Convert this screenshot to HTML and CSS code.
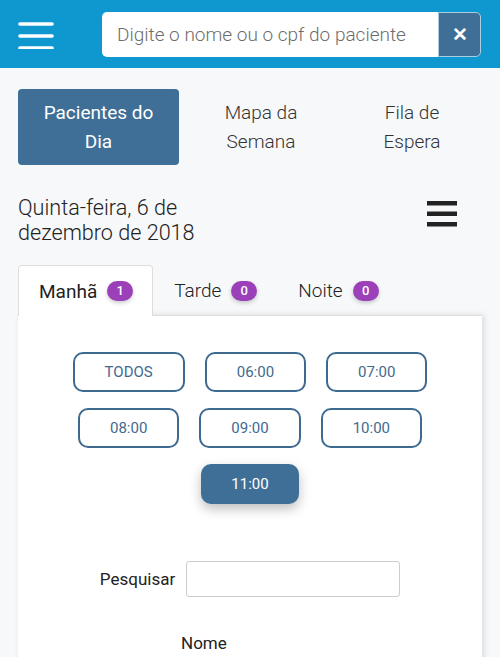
FILE: index.html
```html
<!DOCTYPE html>
<html lang="pt-BR">
<head>
  <meta charset="UTF-8">
  <meta name="viewport" content="width=device-width, initial-scale=1.0">
  <title>Pacientes do Dia</title>
  <link rel="stylesheet" href="styles.css">
</head>
<body>

<div class="topbar">
  <button class="menu-btn" aria-label="Menu">
    <svg width="36" height="28" viewBox="0 0 36 28">
      <line x1="2" y1="3" x2="34" y2="3" />
      <line x1="2" y1="15" x2="34" y2="15" />
      <line x1="2" y1="27" x2="34" y2="27" />
    </svg>
  </button>
  <div class="search">
    <input type="text" placeholder="Digite o nome ou o cpf do paciente">
    <button class="clear-btn" aria-label="Limpar">&#10005;</button>
  </div>
</div>

<div class="page">
  <ul class="nav">
    <li class="nav-item active">Pacientes do<br>Dia</li>
    <li class="nav-item mapa">Mapa da<br>Semana</li>
    <li class="nav-item fila">Fila de<br>Espera</li>
  </ul>

  <div class="day">
    <div class="date">Quinta-feira, 6 de<br>dezembro de 2018</div>
    <svg class="bars" width="30" height="26" viewBox="0 0 30 26">
      <rect x="0" y="0" width="30" height="4.5" />
      <rect x="0" y="10.5" width="30" height="4.5" />
      <rect x="0" y="21" width="30" height="4.5" />
    </svg>
  </div>

  <ul class="tabs">
    <li class="tab active">Manhã <span class="badge">1</span></li>
    <li class="tab">Tarde <span class="badge">0</span></li>
    <li class="tab">Noite <span class="badge">0</span></li>
  </ul>

  <div class="panel">
    <div class="horarios">
      <button class="hora">TODOS</button>
      <button class="hora">06:00</button>
      <button class="hora">07:00</button>
      <button class="hora">08:00</button>
      <button class="hora">09:00</button>
      <button class="hora">10:00</button>
      <button class="hora selected">11:00</button>
    </div>

    <div class="filtro">
      <label for="pesquisar">Pesquisar</label>
      <input type="text" id="pesquisar">
    </div>

    <table class="lista">
      <thead>
        <tr><th>Nome</th></tr>
      </thead>
    </table>
  </div>
</div>

</body>
</html>
```

FILE: styles.css
```css
body {
  font-family: 'Roboto', sans-serif;
  background-color: #f7f8fa;
  color: #222;
  margin: 0;
}

ul {
  list-style: none;
  margin: 0;
  padding: 0;
}

.topbar {
  display: flex;
  align-items: center;
  height: 68px;
  padding: 0 19px 0 18px;
  background-color: #0f97cf;
  gap: 48px;
}

.menu-btn {
  border: none;
  background: none;
  padding: 0;
  width: 36px;
  height: 30px;
  margin-top: 2px;
}

.menu-btn svg {
  display: block;
  stroke: #fff;
  stroke-width: 3.6;
  stroke-linecap: round;
}

.search {
  flex: 1;
  display: flex;
  height: 45px;
}

.search input {
  flex: 1;
  min-width: 0;
  border: none;
  border-radius: 5px 0 0 5px;
  padding: 0 15px;
  font-family: 'Roboto', sans-serif;
  font-weight: 300;
  font-size: 19px;
  color: #333;
  background-color: #fff;
}

.search input::placeholder {
  color: #6d6d6d;
}

.clear-btn {
  width: 43px;
  border: 1px solid #a9cde2;
  border-radius: 0 5px 5px 0;
  background-color: #3f6f96;
  color: #fff;
  font-size: 19px;
  font-weight: bold;
  padding: 0;
}

.page {
  padding: 21px 18px 0 18px;
}

.nav {
  display: flex;
}

.nav-item {
  width: 161px;
  padding: 9px 0;
  text-align: center;
  font-size: 19px;
  font-weight: 300;
  line-height: 29px;
  color: #333;
  border-radius: 4px;
}

.nav-item.active {
  background-color: #3f6f96;
  color: #fff;
  font-weight: 400;
}

.nav-item.mapa {
  width: 164px;
}

.nav-item.fila {
  width: 138px;
}

.day {
  display: flex;
  justify-content: space-between;
  align-items: flex-start;
  margin-top: 30px;
  padding-right: 25px;
}

.date {
  font-size: 21.6px;
  font-weight: 300;
  line-height: 25px;
}

.bars {
  display: block;
  margin-top: 6px;
  fill: #222;
}

.tabs {
  display: flex;
  margin-top: 20px;
  position: relative;
  z-index: 1;
}

.tab {
  display: flex;
  align-items: center;
  gap: 10px;
  height: 50px;
  padding: 0 19px 0 20px;
  font-size: 19px;
  font-weight: 300;
  color: #222;
  border: 1px solid transparent;
  border-bottom: none;
  border-radius: 4px 4px 0 0;
  box-sizing: border-box;
}

.tab.active {
  height: 51px;
  background-color: #fff;
  border-color: #ddd;
  font-weight: 400;
  margin-bottom: -1px;
}

.badge {
  display: inline-block;
  min-width: 26px;
  height: 20px;
  line-height: 20px;
  border-radius: 10px;
  background-color: #9b40b8;
  color: #fff;
  font-size: 13px;
  font-weight: 500;
  text-align: center;
  box-shadow: 0 2px 4px rgba(0, 0, 0, 0.2);
}

.panel {
  background-color: #fff;
  border-top: 1px solid #ddd;
  box-shadow: 2px 0 6px rgba(0, 0, 0, 0.12);
  padding: 36px 0 20px 0;
  min-height: 400px;
}

.horarios {
  display: flex;
  flex-wrap: wrap;
  justify-content: center;
  width: 420px;
  margin: 0 auto;
}

.hora {
  height: 40px;
  box-sizing: border-box;
  margin: 0 10px 16px 10px;
  padding: 0 30px;
  border: 2px solid #3f6a8f;
  border-radius: 10px;
  background-color: #fff;
  color: #3f6a8f;
  font-family: 'Roboto', sans-serif;
  font-size: 15px;
}

.hora.selected {
  border: none;
  background-color: #3f6f96;
  color: #fff;
  box-shadow: 0 5px 12px rgba(0, 0, 0, 0.25);
}

.filtro {
  display: flex;
  justify-content: center;
  align-items: center;
  gap: 11px;
  margin-top: 41px;
}

.filtro label {
  font-size: 17px;
  color: #222;
}

.filtro input {
  width: 214px;
  height: 36px;
  box-sizing: border-box;
  border: 1px solid #ccc;
  border-radius: 3px;
}

.lista {
  margin-top: 36px;
  margin-left: 163px;
  border-collapse: collapse;
}

.lista th {
  padding: 0;
  font-size: 17px;
  font-weight: 400;
  text-align: left;
}
```
